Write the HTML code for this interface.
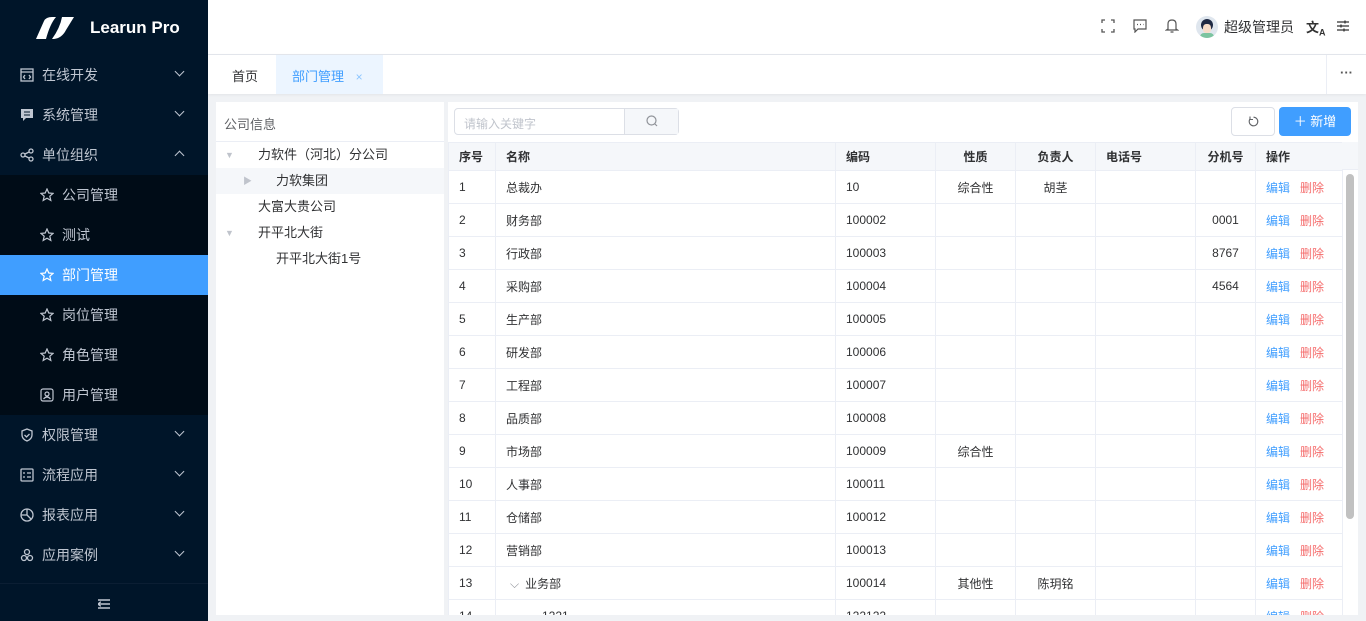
<!DOCTYPE html>
<html style="overflow:hidden;width:1366px;height:621px"><head><meta charset="utf-8"><style>
*{margin:0;padding:0;box-sizing:border-box}
body{width:1366px;height:621px;overflow:hidden;font-family:"Liberation Sans","Noto Sans CJK SC",sans-serif;font-size:13px;color:#303133;background:#f0f2f5;position:relative}
.side{position:absolute;left:0;top:0;width:208px;height:621px;background:#001529}
.logo{height:55px;display:flex;align-items:center;padding-left:30px;color:#fff;font-size:17px;font-weight:bold}
.mi{position:absolute;left:0;width:208px;height:40px;display:flex;align-items:center;color:#bfc6d1;font-size:14px}
.mi svg{position:absolute;left:20px}
.mi .t{position:absolute;left:42px}
.mi .ar{position:absolute;left:176px;top:13px;width:7px;height:7px;border-right:1.3px solid #bfc6d1;border-bottom:1.3px solid #bfc6d1;transform:rotate(45deg)}
.mi .up{transform:rotate(-135deg);top:17px}
.sub svg{left:40px}.sub .t{left:62px}
.act{background:#409eff;color:#fff}
.hdr{position:absolute;left:208px;top:0;right:0;height:55px;background:#fff;border-bottom:1px solid #e4e7ed}
.tabs{position:absolute;left:208px;top:55px;right:0;height:39px;background:#fff;box-shadow:0 1px 3px rgba(0,0,0,.06)}
.panel{position:absolute;background:#fff}
.tw{position:absolute;left:448px;top:142px;width:910px;height:473px;overflow:hidden}
table{border-collapse:collapse;table-layout:fixed;font-size:12px}
td,th{height:33px;border:1px solid #ebeef5;padding:0 10px;text-align:left;white-space:nowrap;overflow:hidden}
th{height:28px;background:#f5f7fa;font-weight:bold;color:#303133}
.c{text-align:center}
.e{color:#409eff}.d{color:#f56c6c;margin-left:10px}
</style></head><body>
<div class="side">
<div class="logo"><svg width="50" height="24" viewBox="0 0 50 24"><path d="M6 23 L14 5 Q16 1 22 1 L26 1 Q20 8 16 23Z" fill="#fff"/><path d="M24 23 Q32 22 36 14 L44 1 L32 1 Q30 12 22 23Z" fill="#fff"/></svg><span style="margin-left:10px">Learun Pro</span></div>
<div class="mi" style="top:55px"><svg width="14" height="14" viewBox="0 0 14 14" fill="none" stroke="#bfc6d1" stroke-width="1.3"><rect x="1" y="1" width="12" height="12"/><path d="M1 4h12M5 7l-1.5 2 1.5 2M9 7l1.5 2-1.5 2"/></svg><span class="t">在线开发</span><i class="ar"></i></div>
<div class="mi" style="top:95px"><svg width="14" height="14" viewBox="0 0 14 14"><path d="M1 1h12v9H6l-3 3v-3H1z" fill="#bfc6d1"/><path d="M4 4h6M4 7h6" stroke="#001529"/></svg><span class="t">系统管理</span><i class="ar"></i></div>
<div class="mi" style="top:135px"><svg width="14" height="14" viewBox="0 0 14 14" fill="none" stroke="#bfc6d1" stroke-width="1.3"><circle cx="3" cy="7" r="2"/><circle cx="11" cy="3" r="2"/><circle cx="11" cy="11" r="2"/><path d="M5 6l4-2M5 8l4 2"/></svg><span class="t">单位组织</span><i class="ar up"></i></div>
<div style="position:absolute;top:175px;left:0;width:208px;height:240px;background:#000c17"></div>
<div class="mi sub" style="top:175px"><svg width="14" height="14" viewBox="0 0 14 14" fill="none" stroke="#bfc6d1" stroke-width="1.2"><path d="M7 1l1.8 4 4.2.4-3.2 2.8 1 4.2L7 10.2 3.2 12.4l1-4.2L1 5.4 5.2 5z"/></svg><span class="t">公司管理</span></div>
<div class="mi sub" style="top:215px"><svg width="14" height="14" viewBox="0 0 14 14" fill="none" stroke="#bfc6d1" stroke-width="1.2"><path d="M7 1l1.8 4 4.2.4-3.2 2.8 1 4.2L7 10.2 3.2 12.4l1-4.2L1 5.4 5.2 5z"/></svg><span class="t">测试</span></div>
<div class="mi sub act" style="top:255px"><svg width="14" height="14" viewBox="0 0 14 14" fill="none" stroke="#fff" stroke-width="1.2"><path d="M7 1l1.8 4 4.2.4-3.2 2.8 1 4.2L7 10.2 3.2 12.4l1-4.2L1 5.4 5.2 5z"/></svg><span class="t">部门管理</span></div>
<div class="mi sub" style="top:295px"><svg width="14" height="14" viewBox="0 0 14 14" fill="none" stroke="#bfc6d1" stroke-width="1.2"><path d="M7 1l1.8 4 4.2.4-3.2 2.8 1 4.2L7 10.2 3.2 12.4l1-4.2L1 5.4 5.2 5z"/></svg><span class="t">岗位管理</span></div>
<div class="mi sub" style="top:335px"><svg width="14" height="14" viewBox="0 0 14 14" fill="none" stroke="#bfc6d1" stroke-width="1.2"><path d="M7 1l1.8 4 4.2.4-3.2 2.8 1 4.2L7 10.2 3.2 12.4l1-4.2L1 5.4 5.2 5z"/></svg><span class="t">角色管理</span></div>
<div class="mi sub" style="top:375px"><svg width="14" height="14" viewBox="0 0 14 14" fill="none" stroke="#bfc6d1" stroke-width="1.2"><rect x="1" y="1" width="12" height="12" rx="2"/><circle cx="7" cy="6" r="2"/><path d="M3.5 11q3.5-4 7 0"/></svg><span class="t">用户管理</span></div>
<div class="mi" style="top:415px"><svg width="14" height="14" viewBox="0 0 14 14" fill="none" stroke="#bfc6d1" stroke-width="1.3"><path d="M7 1l5 2v4q0 4-5 6-5-2-5-6V3z"/><path d="M4.5 7l2 2 3-3"/></svg><span class="t">权限管理</span><i class="ar"></i></div>
<div class="mi" style="top:455px"><svg width="14" height="14" viewBox="0 0 14 14" fill="none" stroke="#bfc6d1" stroke-width="1.3"><rect x="1" y="1" width="12" height="12" rx="1"/><path d="M3 5h2M7 5h4M3 9h2M7 9h4"/></svg><span class="t">流程应用</span><i class="ar"></i></div>
<div class="mi" style="top:495px"><svg width="14" height="14" viewBox="0 0 14 14" fill="none" stroke="#bfc6d1" stroke-width="1.3"><circle cx="7" cy="7" r="6"/><path d="M7 1v6H1M7 7l4 4"/></svg><span class="t">报表应用</span><i class="ar"></i></div>
<div class="mi" style="top:535px"><svg width="14" height="14" viewBox="0 0 14 14" fill="none" stroke="#bfc6d1" stroke-width="1.3"><circle cx="7" cy="4" r="2.5"/><circle cx="4" cy="10" r="2.5"/><circle cx="10" cy="10" r="2.5"/></svg><span class="t">应用案例</span><i class="ar"></i></div>
<div style="position:absolute;top:583px;left:0;width:208px;border-top:1px solid #0b1e33"></div>
<svg style="position:absolute;left:98px;top:599px" width="12" height="10"><path d="M0 1h12M3 5h9M0 9h12M0 5l2-1.5v3z" stroke="#bfc6d1" stroke-width="1.5" fill="#bfc6d1"/></svg>
</div>
<div class="hdr">
<svg style="position:absolute;left:893px;top:19px" width="14" height="14" fill="none" stroke="#555" stroke-width="1.3"><path d="M1 4V1h3M10 1h3v3M13 10v3h-3M4 13H1v-3"/></svg>
<svg style="position:absolute;left:925px;top:19px" width="14" height="14" fill="none" stroke="#555" stroke-width="1.2"><path d="M1 1h12v9H5l-3 3V10H1z"/><path d="M4 5.5h1M7 5.5h1M10 5.5h.5"/></svg>
<svg style="position:absolute;left:957px;top:18px" width="14" height="15" fill="none" stroke="#555" stroke-width="1.2"><path d="M3 11V6q0-4 4-4t4 4v5l1.5 1h-11zM5.5 14h3"/></svg>
<div style="position:absolute;left:988px;top:16px;width:22px;height:22px;border-radius:50%;background:#dfe6ee;overflow:hidden"><div style="position:absolute;left:5px;top:3px;width:12px;height:12px;border-radius:50%;background:#1f2a44"></div><div style="position:absolute;left:7px;top:8px;width:8px;height:9px;border-radius:40%;background:#f6dcc8"></div><div style="position:absolute;left:4px;top:17px;width:14px;height:6px;background:#7cc4a0;border-radius:4px 4px 0 0"></div></div>
<span style="position:absolute;left:1016px;top:17px;font-size:14px;color:#303133">超级管理员</span>
<span style="position:absolute;left:1098px;top:17px;font-size:13px;font-weight:bold;color:#333">文<sub style="font-size:9px">A</sub></span>
<svg style="position:absolute;left:1128px;top:19px" width="14" height="14" stroke="#333" stroke-width="1.3"><path d="M1 3h12M1 7h12M1 11h12"/><path d="M9 1.5v3M5 5.5v3M8 9.5v3"/></svg>
</div>
<div class="tabs">
<span style="position:absolute;left:24px;top:11px;font-size:13px">首页</span>
<div style="position:absolute;left:68px;top:0;width:107px;height:39px;background:#ecf5ff;color:#409eff;font-size:13px;padding:11px 0 0 16px">部门管理 <span style="margin-left:8px;font-size:12px;color:#8cc5ff">×</span></div>
<div style="position:absolute;right:0;top:0;width:40px;height:39px;border-left:1px solid #ebeef5;text-align:center;line-height:36px;color:#555;font-weight:bold">···</div>
</div>
<div class="panel" style="left:216px;top:102px;width:228px;height:513px">
<div style="height:40px;border-bottom:1px solid #ebeef5;padding:12px 8px;font-size:13px;color:#606266">公司信息</div>
<div style="position:relative;font-size:13px">
<div style="height:26px;line-height:26px;padding-left:42px"><span style="position:absolute;left:9px;color:#c0c4cc;font-size:9px">▼</span>力软件（河北）分公司</div>
<div style="height:26px;line-height:26px;padding-left:60px;background:#f5f7fa"><span style="position:absolute;left:27px;color:#c0c4cc;font-size:9px">▶</span>力软集团</div>
<div style="height:26px;line-height:26px;padding-left:42px">大富大贵公司</div>
<div style="height:26px;line-height:26px;padding-left:42px"><span style="position:absolute;left:9px;color:#c0c4cc;font-size:9px">▼</span>开平北大街</div>
<div style="height:26px;line-height:26px;padding-left:60px">开平北大街1号</div>
</div></div>
<div class="panel" style="left:448px;top:102px;width:910px;height:513px"></div>
<div style="position:absolute;left:454px;top:108px;width:225px;height:27px;border:1px solid #dcdfe6;border-radius:4px;background:#fff"><span style="position:absolute;left:9px;top:6px;font-size:12px;color:#c0c4cc">请输入关键字</span><div style="position:absolute;left:169px;top:0;width:54px;height:25px;background:#f5f7fa;border-left:1px solid #dcdfe6"><svg style="position:absolute;left:21px;top:6px" width="12" height="12" fill="none" stroke="#909399" stroke-width="1.2"><circle cx="5.5" cy="5.5" r="4.5"/><path d="M9 9l2 2"/></svg></div></div>
<div style="position:absolute;left:1231px;top:107px;width:44px;height:29px;border:1px solid #dcdfe6;border-radius:4px;background:#fff"><svg style="position:absolute;left:16px;top:8px" width="11" height="11" fill="none" stroke="#606266" stroke-width="1.1"><path d="M2 3A4.3 4.3 0 1 0 5.5 1.2M2 0.5v3h3"/></svg></div>
<div style="position:absolute;left:1279px;top:107px;width:72px;height:29px;border-radius:4px;background:#409eff;color:#fff;font-size:13px;line-height:29px;text-align:center">＋ 新增</div>
<div class="tw"><table>
<colgroup><col style="width:47px"><col style="width:340px"><col style="width:100px"><col style="width:80px"><col style="width:80px"><col style="width:100px"><col style="width:60px"><col style="width:87px"></colgroup>
<tr><th>序号</th><th>名称</th><th>编码</th><th class="c">性质</th><th class="c">负责人</th><th>电话号</th><th class="c">分机号</th><th>操作</th></tr>
<tr><td>1</td><td>总裁办</td><td>10</td><td class="c">综合性</td><td class="c">胡茎</td><td></td><td class="c"></td><td><span class="e">编辑</span><span class="d">删除</span></td></tr>
<tr><td>2</td><td>财务部</td><td>100002</td><td></td><td></td><td></td><td class="c">0001</td><td><span class="e">编辑</span><span class="d">删除</span></td></tr>
<tr><td>3</td><td>行政部</td><td>100003</td><td></td><td></td><td></td><td class="c">8767</td><td><span class="e">编辑</span><span class="d">删除</span></td></tr>
<tr><td>4</td><td>采购部</td><td>100004</td><td></td><td></td><td></td><td class="c">4564</td><td><span class="e">编辑</span><span class="d">删除</span></td></tr>
<tr><td>5</td><td>生产部</td><td>100005</td><td></td><td></td><td></td><td></td><td><span class="e">编辑</span><span class="d">删除</span></td></tr>
<tr><td>6</td><td>研发部</td><td>100006</td><td></td><td></td><td></td><td></td><td><span class="e">编辑</span><span class="d">删除</span></td></tr>
<tr><td>7</td><td>工程部</td><td>100007</td><td></td><td></td><td></td><td></td><td><span class="e">编辑</span><span class="d">删除</span></td></tr>
<tr><td>8</td><td>品质部</td><td>100008</td><td></td><td></td><td></td><td></td><td><span class="e">编辑</span><span class="d">删除</span></td></tr>
<tr><td>9</td><td>市场部</td><td>100009</td><td class="c">综合性</td><td></td><td></td><td></td><td><span class="e">编辑</span><span class="d">删除</span></td></tr>
<tr><td>10</td><td>人事部</td><td>100011</td><td></td><td></td><td></td><td></td><td><span class="e">编辑</span><span class="d">删除</span></td></tr>
<tr><td>11</td><td>仓储部</td><td>100012</td><td></td><td></td><td></td><td></td><td><span class="e">编辑</span><span class="d">删除</span></td></tr>
<tr><td>12</td><td>营销部</td><td>100013</td><td></td><td></td><td></td><td></td><td><span class="e">编辑</span><span class="d">删除</span></td></tr>
<tr><td>13</td><td><span style="color:#909399;margin:0 6px 0 4px">⌵</span>业务部</td><td>100014</td><td class="c">其他性</td><td class="c">陈玥铭</td><td></td><td></td><td><span class="e">编辑</span><span class="d">删除</span></td></tr>
<tr><td>14</td><td style="padding-left:46px">1221</td><td>122122</td><td></td><td></td><td></td><td></td><td><span class="e">编辑</span><span class="d">删除</span></td></tr>
</table></div>
<div style="position:absolute;left:1342px;top:142px;width:16px;height:28px;background:#f5f7fa;border-bottom:1px solid #ebeef5"></div>
<div style="position:absolute;left:1346px;top:174px;width:8px;height:345px;border-radius:4px;background:#c1c1c1"></div>
<div style="position:absolute;left:208px;top:615px;width:1158px;height:6px;background:#f0f2f5"></div>
</body></html>
